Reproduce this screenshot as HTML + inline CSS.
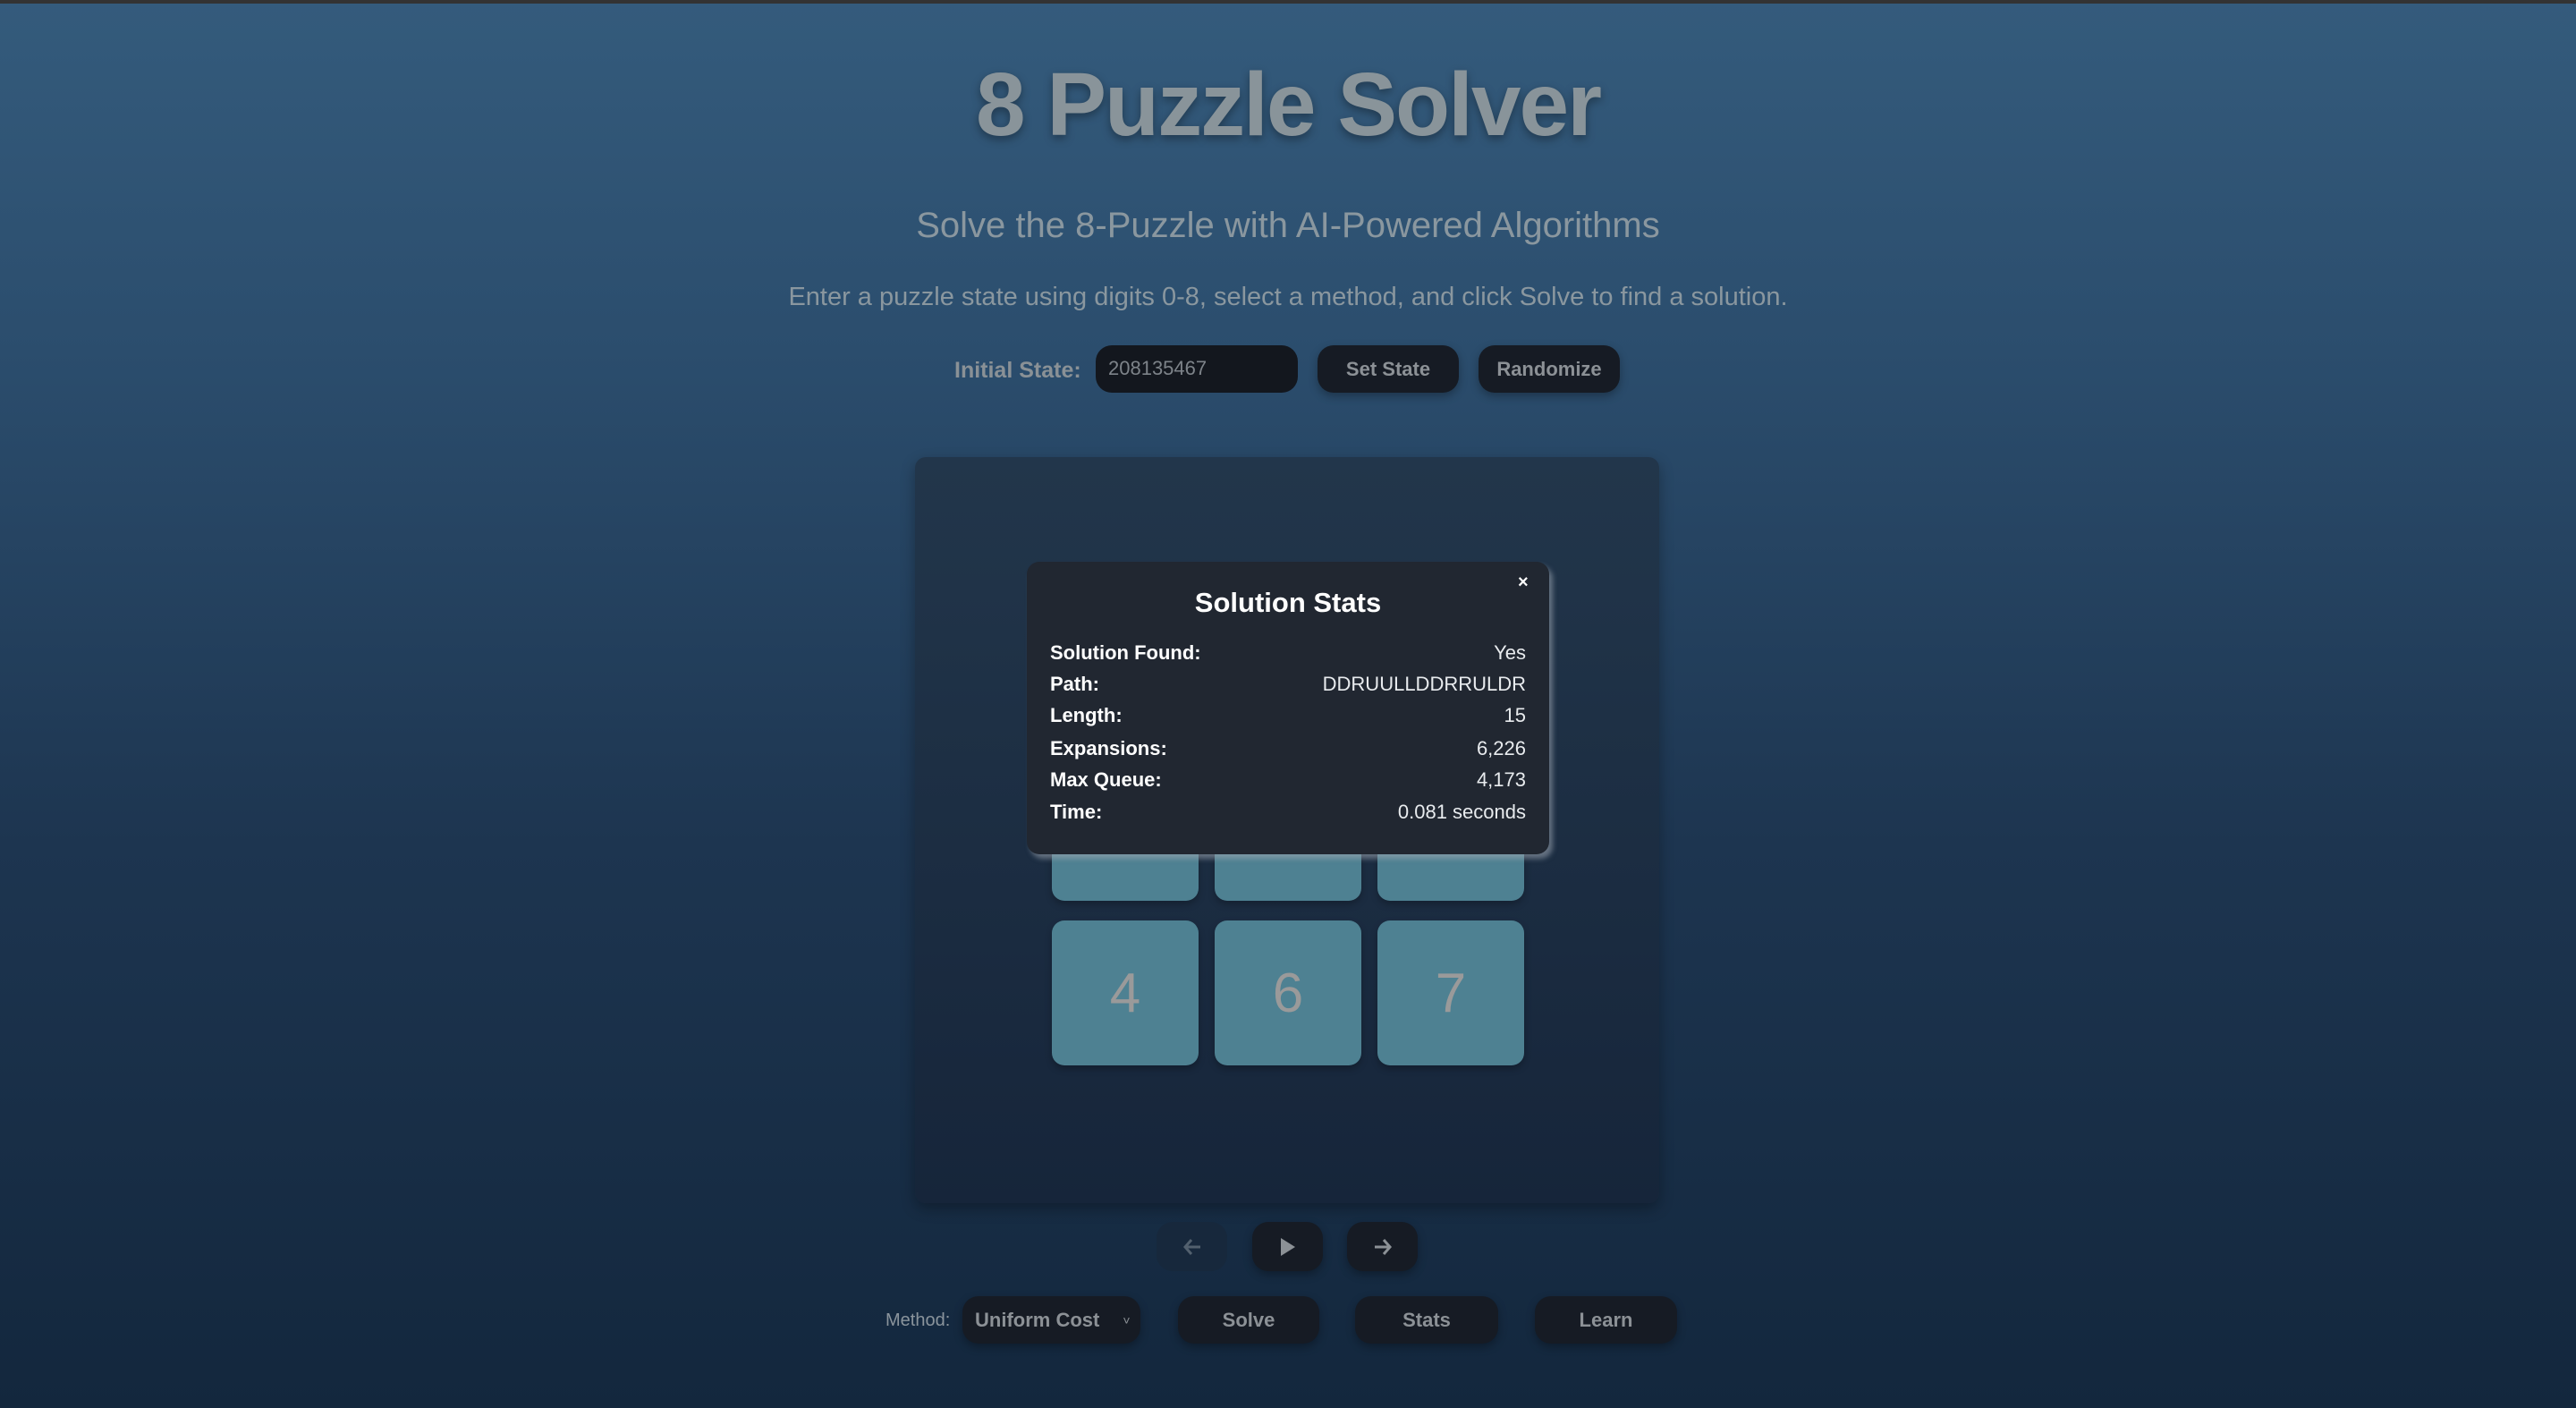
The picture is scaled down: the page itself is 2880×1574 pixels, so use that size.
<!DOCTYPE html>
<html><head><meta charset="utf-8"><style>
*{margin:0;padding:0;box-sizing:border-box}
html,body{width:2880px;height:1574px;overflow:hidden}
body{background:linear-gradient(180deg,#345b7c 0%,#2b4d6d 25%,#1d3550 60%,#13273d 100%);font-family:"Liberation Sans",sans-serif;position:relative;border-top:4px solid #333}
.a{position:absolute}
.c{text-align:center}
h1{position:absolute;left:0;width:2880px;top:56px;text-align:center;font-size:100px;font-weight:bold;color:#89949a;letter-spacing:-2px;text-shadow:0 4px 10px rgba(0,0,0,.35)}
.sub{left:0;width:2880px;top:226px;font-size:40px;color:#8a979f;text-align:center}
.desc{left:0;width:2880px;top:312px;font-size:29px;color:#8a979f;text-align:center}
.btn{background:#161b24;border-radius:18px;color:#8c9196;font-weight:bold;font-size:22px;display:flex;align-items:center;justify-content:center;box-shadow:0 4px 10px rgba(0,0,0,.3)}
.tile{background:#4e8192;border-radius:14px;width:164px;height:162px;color:#9a9a9a;font-size:62px;display:flex;align-items:center;justify-content:center;box-shadow:0 4px 8px rgba(0,0,0,.25)}
.row{position:absolute;left:1174px;width:532px;font-size:22px;color:#e8ebee;display:flex;justify-content:space-between}
.row b{color:#fff}
</style></head><body>
<h1>8 Puzzle Solver</h1>
<div class="a sub">Solve the 8-Puzzle with AI-Powered Algorithms</div>
<div class="a desc">Enter a puzzle state using digits 0-8, select a method, and click Solve to find a solution.</div>
<div class="a" style="left:1067px;top:396px;font-size:25px;font-weight:bold;color:#8a9196">Initial State:</div>
<div class="a" style="left:1225px;top:382px;width:226px;height:53px;background:#13171e;border-radius:18px;color:#7d8389;font-size:22px;padding:13px 14px">208135467</div>
<div class="a btn" style="left:1473px;top:382px;width:158px;height:53px">Set State</div>
<div class="a btn" style="left:1653px;top:382px;width:158px;height:53px">Randomize</div>

<div class="a" style="left:1023px;top:507px;width:832px;height:834px;background:linear-gradient(180deg,#22364b,#16253a);border-radius:12px;box-shadow:0 6px 16px rgba(0,0,0,.3)"></div>
<div class="a tile" style="left:1176px;top:841px"></div>
<div class="a tile" style="left:1358px;top:841px"></div>
<div class="a tile" style="left:1540px;top:841px"></div>
<div class="a tile" style="left:1176px;top:1025px">4</div>
<div class="a tile" style="left:1358px;top:1025px">6</div>
<div class="a tile" style="left:1540px;top:1025px">7</div>

<div class="a" style="left:1148px;top:624px;width:584px;height:327px;background:#212731;border-radius:14px;box-shadow:4px 5px 6px rgba(160,170,180,.55)"></div>
<div class="a" style="left:1697px;top:636px;font-size:20px;font-weight:bold;color:#fff">×</div>
<div class="a c" style="left:1148px;width:584px;top:652px;font-size:31px;font-weight:bold;color:#fff">Solution Stats</div>
<div class="row" style="top:713px"><b>Solution Found:</b><span>Yes</span></div>
<div class="row" style="top:748px"><b>Path:</b><span>DDRUULLDDRRULDR</span></div>
<div class="row" style="top:783px"><b>Length:</b><span>15</span></div>
<div class="row" style="top:820px"><b>Expansions:</b><span>6,226</span></div>
<div class="row" style="top:855px"><b>Max Queue:</b><span>4,173</span></div>
<div class="row" style="top:891px"><b>Time:</b><span>0.081 seconds</span></div>

<div class="a btn" style="left:1293px;top:1362px;width:79px;height:55px;background:#17283c;box-shadow:none"><svg width="22" height="20" viewBox="0 0 22 20"><path d="M20 10H3M10 2L3 10L10 18" stroke="#52606e" stroke-width="3" fill="none"/></svg></div>
<div class="a btn" style="left:1400px;top:1362px;width:79px;height:55px"><svg width="22" height="24" viewBox="0 0 22 24"><path d="M3 2L19 12L3 22Z" fill="#8c9196"/></svg></div>
<div class="a btn" style="left:1506px;top:1362px;width:79px;height:55px"><svg width="22" height="20" viewBox="0 0 22 20"><path d="M2 10H19M12 2L19 10L12 18" stroke="#8c9196" stroke-width="3" fill="none"/></svg></div>

<div class="a" style="left:990px;top:1461px;font-size:20px;color:#8a949c">Method:</div>
<div class="a btn" style="left:1076px;top:1445px;width:199px;height:53px;justify-content:flex-start;padding-left:14px">Uniform Cost<span style="font-size:14px;margin-left:26px;font-weight:normal">˅</span></div>
<div class="a btn" style="left:1317px;top:1445px;width:158px;height:53px">Solve</div>
<div class="a btn" style="left:1515px;top:1445px;width:160px;height:53px">Stats</div>
<div class="a btn" style="left:1716px;top:1445px;width:159px;height:53px">Learn</div>
</body></html>
